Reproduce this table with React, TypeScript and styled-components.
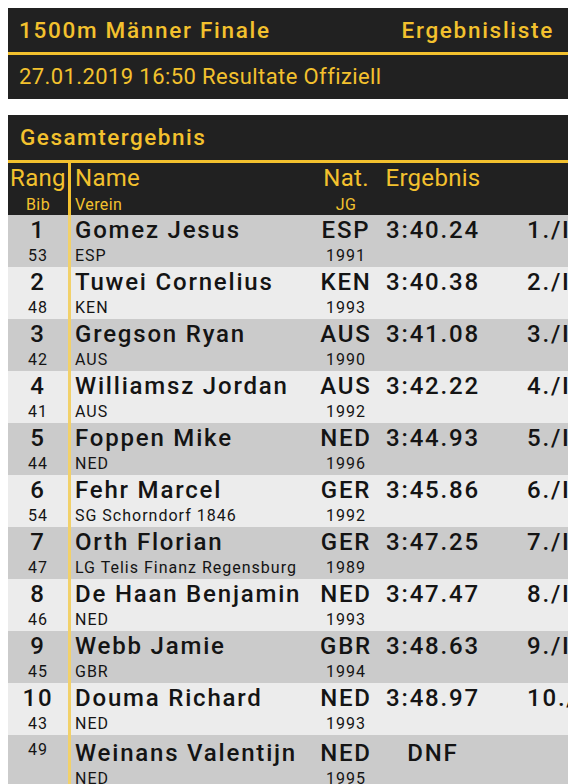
import React, { FC } from 'react';
import styled, { createGlobalStyle } from 'styled-components';

const YELLOW = '#f3c12e';
const DARK = '#212121';

type Result = {
    rank?: number;
    bib: number;
    name: string;
    club: string;
    nat: string;
    year: number;
    time: string;
};

const results: Result[] = [
    { rank: 1, bib: 53, name: 'Gomez Jesus', club: 'ESP', nat: 'ESP', year: 1991, time: '3:40.24' },
    { rank: 2, bib: 48, name: 'Tuwei Cornelius', club: 'KEN', nat: 'KEN', year: 1993, time: '3:40.38' },
    { rank: 3, bib: 42, name: 'Gregson Ryan', club: 'AUS', nat: 'AUS', year: 1990, time: '3:41.08' },
    { rank: 4, bib: 41, name: 'Williamsz Jordan', club: 'AUS', nat: 'AUS', year: 1992, time: '3:42.22' },
    { rank: 5, bib: 44, name: 'Foppen Mike', club: 'NED', nat: 'NED', year: 1996, time: '3:44.93' },
    { rank: 6, bib: 54, name: 'Fehr Marcel', club: 'SG Schorndorf 1846', nat: 'GER', year: 1992, time: '3:45.86' },
    { rank: 7, bib: 47, name: 'Orth Florian', club: 'LG Telis Finanz Regensburg', nat: 'GER', year: 1989, time: '3:47.25' },
    { rank: 8, bib: 46, name: 'De Haan Benjamin', club: 'NED', nat: 'NED', year: 1993, time: '3:47.47' },
    { rank: 9, bib: 45, name: 'Webb Jamie', club: 'GBR', nat: 'GBR', year: 1994, time: '3:48.63' },
    { rank: 10, bib: 43, name: 'Douma Richard', club: 'NED', nat: 'NED', year: 1993, time: '3:48.97' },
    { bib: 49, name: 'Weinans Valentijn', club: 'NED', nat: 'NED', year: 1995, time: 'DNF' },
];

const App: FC = () => {
    return (
        <>
            <GlobalStyle />
            <PageStyled>
                <InfoBoxStyled>
                    <TitleBarStyled>
                        <TitleStyled>1500m Männer Finale</TitleStyled>
                        <TitleStyled>Ergebnisliste</TitleStyled>
                    </TitleBarStyled>
                    <DateBarStyled>27.01.2019 16:50 Resultate Offiziell</DateBarStyled>
                </InfoBoxStyled>

                <PanelStyled>
                    <PanelTitleStyled>Gesamtergebnis</PanelTitleStyled>

                    <HeadRowStyled>
                        <RankCell>
                            <HeadLabel>Rang</HeadLabel>
                            <HeadSub>Bib</HeadSub>
                        </RankCell>
                        <NameCell $head>
                            <HeadLabel>Name</HeadLabel>
                            <HeadSub>Verein</HeadSub>
                        </NameCell>
                        <NatCell>
                            <HeadLabel>Nat.</HeadLabel>
                            <HeadSub>JG</HeadSub>
                        </NatCell>
                        <ResultCell>
                            <HeadLabel>Ergebnis</HeadLabel>
                        </ResultCell>
                        <ExtraCell />
                    </HeadRowStyled>

                    {results.map((r, i) => (
                        <RowStyled key={r.bib} $alt={i % 2 === 1}>
                            <RankCell>
                                {r.rank !== undefined ? (
                                    <>
                                        <MainText>{r.rank}</MainText>
                                        <SubText>{r.bib}</SubText>
                                    </>
                                ) : (
                                    <BibOnly>{r.bib}</BibOnly>
                                )}
                            </RankCell>
                            <NameCell $shift={r.rank === undefined}>
                                <MainText>{r.name}</MainText>
                                <SubText>{r.club}</SubText>
                            </NameCell>
                            <NatCell $shift={r.rank === undefined}>
                                <MainText>{r.nat}</MainText>
                                <SubText>{r.year}</SubText>
                            </NatCell>
                            <ResultCell $shift={r.rank === undefined}>
                                <MainText>{r.time}</MainText>
                            </ResultCell>
                            <ExtraCell>
                                {r.rank !== undefined && <MainText>{r.rank}./I</MainText>}
                            </ExtraCell>
                        </RowStyled>
                    ))}
                </PanelStyled>
            </PageStyled>
        </>
    );
};

export default App;

const GlobalStyle = createGlobalStyle`
    html, body {
        margin: 0;
        padding: 0;
        background: #ffffff;
    }
    body {
        font-family: Roboto, "Noto Sans", "Liberation Sans", sans-serif;
    }
`;

const PageStyled = styled.div`
    width: 560px;
    height: 784px;
    padding: 8px 8px 0;
    overflow: hidden;
    display: flex;
    flex-direction: column;
    gap: 16px;
`;

const InfoBoxStyled = styled.div`
    background: ${DARK};
    color: ${YELLOW};
`;

const TitleBarStyled = styled.div`
    height: 44px;
    display: flex;
    align-items: center;
    justify-content: space-between;
    padding: 0 14px 0 11px;
    border-bottom: 3px solid ${YELLOW};
`;

const TitleStyled = styled.span`
    font-size: 22.5px;
    font-weight: 500;
    letter-spacing: 1.7px;
    line-height: 44px;
`;

const DateBarStyled = styled.div`
    height: 44px;
    line-height: 44px;
    padding-left: 11px;
    font-size: 22px;
    letter-spacing: 0.4px;
`;

const PanelStyled = styled.div`
    display: flex;
    flex-direction: column;
`;

const PanelTitleStyled = styled.div`
    height: 45px;
    line-height: 45px;
    padding-left: 12px;
    background: ${DARK};
    color: ${YELLOW};
    font-size: 22.5px;
    font-weight: 500;
    letter-spacing: 1.5px;
    border-bottom: 3px solid ${YELLOW};
`;

const gridColumns = '60px 252px 52px 122px 74px';

const HeadRowStyled = styled.div`
    display: grid;
    grid-template-columns: ${gridColumns};
    height: 52px;
    background: ${DARK};
    color: ${YELLOW};
`;

const RowStyled = styled.div<{ $alt: boolean }>`
    display: grid;
    grid-template-columns: ${gridColumns};
    height: 52px;
    background: ${(p) => (p.$alt ? '#ececec' : '#cbcbcb')};
    color: #141414;
    flex-shrink: 0;
`;

const Cell = styled.div<{ $shift?: boolean }>`
    display: flex;
    flex-direction: column;
    min-width: 0;
    padding-top: ${(p) => (p.$shift ? '3px' : '0')};
`;

const RankCell = styled(Cell)`
    align-items: center;
`;

const NameCell = styled(Cell)<{ $head?: boolean }>`
    padding-left: 4px;
    border-left: 3px solid ${(p) => (p.$head ? YELLOW : '#f2d16a')};
    white-space: nowrap;
`;

const NatCell = styled(Cell)`
    align-items: center;
`;

const ResultCell = styled(Cell)`
    align-items: center;
`;

const ExtraCell = styled(Cell)`
    padding-left: 33px;
    overflow: hidden;
    white-space: nowrap;
`;

const MainText = styled.span`
    font-size: 24px;
    font-weight: 500;
    line-height: 30px;
    letter-spacing: 1.8px;
`;

const SubText = styled.span`
    font-size: 16px;
    line-height: 22px;
    letter-spacing: 1px;
`;

const BibOnly = styled(SubText)`
    padding-top: 4px;
`;

const HeadLabel = styled.span`
    font-size: 24px;
    line-height: 30px;
    letter-spacing: 0.3px;
`;

const HeadSub = styled.span`
    font-size: 16px;
    line-height: 22px;
    padding-top: 1px;
    letter-spacing: 0.4px;
`;
